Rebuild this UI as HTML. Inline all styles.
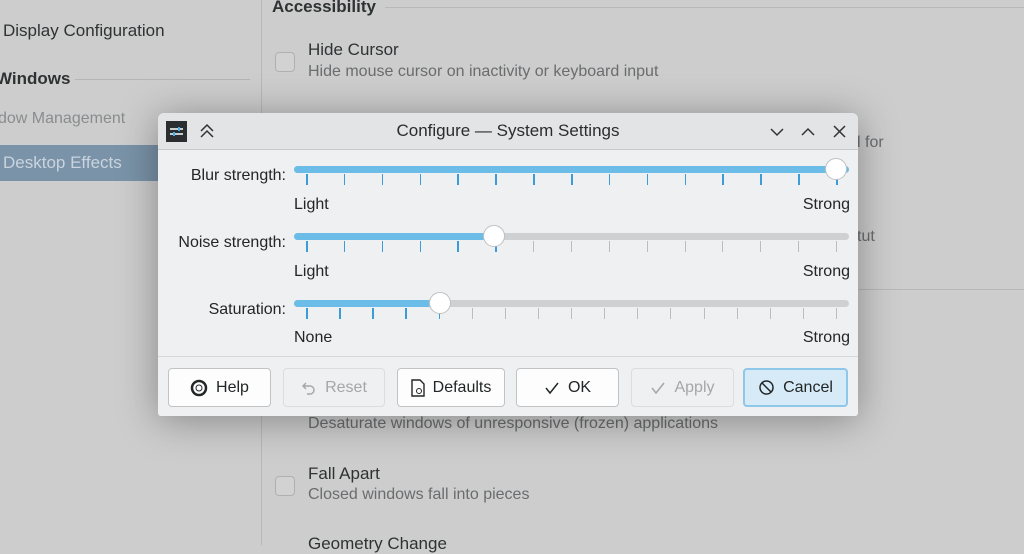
<!DOCTYPE html>
<html><head><meta charset="utf-8"><style>
*{margin:0;padding:0;box-sizing:border-box}
body{width:1024px;height:545px;overflow:hidden;background:#cdcdcd;font-family:"Liberation Sans",sans-serif;position:relative;color:#2a2a2a}
.a{position:absolute;white-space:nowrap}
.bg{font-size:17px;color:#2f3233}
.sub{font-size:16px;color:#6a6c6e}
.cb{position:absolute;width:20px;height:20px;border:1px solid #b0b0b0;border-radius:4px;background:#d2d2d2}
.dlg{position:absolute;left:158px;top:113px;width:700px;height:303px;background:#eff0f1;border-radius:6px 6px 3px 3px;box-shadow:0 4px 40px rgba(0,0,0,.35);overflow:hidden}
.tb{position:absolute;left:0;top:0;width:700px;height:37px;background:#e3e4e6;border-bottom:1px solid #c8c9cb}
.lbl{position:absolute;font-size:16px;color:#232627;text-align:right;width:128px;left:0}
.trk{position:absolute;left:136px;width:555px;height:7px;border-radius:4px;background:#cfd0d2}
.fill{position:absolute;left:0;top:0;height:7px;border-radius:4px;background:#6bbde8}
.tk{position:absolute;width:1px;height:11px;background:#bcbdbf}
.tk.b{background:#3d9cd8;width:1.5px}
.th{position:absolute;width:22px;height:22px;border-radius:50%;background:#fff;border:1px solid #bfc0c2}
.sm{position:absolute;font-size:16px;color:#232627}
.btn{position:absolute;top:255px;height:39px;border:1px solid #c2c3c5;border-radius:4px;background:#fdfdfd;font-size:16px;color:#232627;display:flex;align-items:center;justify-content:center;gap:8px}
.btn.dis{background:#eff0f1;color:#a4a6a8;border-color:#dcdddf}
</style></head><body>
<div class="a" style="left:261px;top:0;width:1px;height:545px;background:#b8b8b8"></div>
<div class="a" style="left:385px;top:7px;width:639px;height:1px;background:#b8b8b8"></div>
<div class="a" style="left:856px;top:289px;width:168px;height:1px;background:#b8b8b8"></div>
<div class="a bg" style="left:3px;top:21px">Display Configuration</div>
<div class="a bg" style="left:-4px;top:69px;font-weight:bold">Windows</div>
<div class="a" style="left:75px;top:79px;width:175px;height:1px;background:#b5b5b5"></div>
<div class="a sub" style="left:-2px;top:110px;color:#8a8c8e">dow Management</div>
<div class="a" style="left:0;top:145px;width:160px;height:36px;background:#7a93a8"></div>
<div class="a bg" style="left:3px;top:153px;color:#c9d4de">Desktop Effects</div>
<div class="a bg" style="left:272px;top:-3px;font-weight:bold">Accessibility</div>
<div class="cb" style="left:275px;top:52px"></div>
<div class="a bg" style="left:308px;top:40px">Hide Cursor</div>
<div class="a sub" style="left:308px;top:63px">Hide mouse cursor on inactivity or keyboard input</div>
<div class="a sub" style="left:857px;top:134px">l for</div>
<div class="a sub" style="left:857px;top:228px">tut</div>
<div class="a sub" style="left:308px;top:415px">Desaturate windows of unresponsive (frozen) applications</div>
<div class="cb" style="left:275px;top:476px"></div>
<div class="a bg" style="left:308px;top:464px">Fall Apart</div>
<div class="a sub" style="left:308px;top:486px">Closed windows fall into pieces</div>
<div class="a bg" style="left:308px;top:534px">Geometry Change</div>

<div class="dlg">
<div class="tb">
 <div class="a" style="left:8px;top:8px;width:21px;height:21px;background:#2b2e31"><svg width="21" height="21"><path d="M4 8h13M4 13h13" stroke="#fff" stroke-width="1.5"/><rect x="12" y="6" width="2" height="4" fill="#3daee9"/><rect x="7" y="11" width="2" height="4" fill="#3daee9"/></svg></div>
 <svg class="a" style="left:41px;top:9px" width="16" height="18"><path d="M2 9l6-6 6 6M2 15l6-6 6 6" stroke="#333" stroke-width="1.5" fill="none"/></svg>
 <div class="a" style="left:0;width:700px;text-align:center;top:8px;font-size:17px;color:#2a2c2e">Configure — System Settings</div>
 <svg class="a" style="left:610px;top:11px" width="80" height="16"><path d="M3 5l6 6 6-6" stroke="#333" stroke-width="1.5" fill="none"/><path d="M34 11l6-6 6 6" stroke="#333" stroke-width="1.5" fill="none"/><path d="M66 2l11 11M77 2L66 13" stroke="#333" stroke-width="1.5" fill="none"/></svg>
</div>
<div class="lbl" style="top:54px">Blur strength:</div>
<div class="lbl" style="top:121px">Noise strength:</div>
<div class="lbl" style="top:188px">Saturation:</div>
<div class="trk" style="top:53px"><div class="fill" style="width:555px"></div></div>
<div class="trk" style="top:120px"><div class="fill" style="width:200px"></div></div>
<div class="trk" style="top:187px"><div class="fill" style="width:146px"></div></div>
<div id="ticks"></div>
<div class="th" style="left:667px;top:45px"></div>
<div class="th" style="left:325px;top:112px"></div>
<div class="th" style="left:271px;top:179px"></div>
<div class="sm" style="left:136px;top:83px">Light</div><div class="sm" style="right:8px;top:83px">Strong</div>
<div class="sm" style="left:136px;top:150px">Light</div><div class="sm" style="right:8px;top:150px">Strong</div>
<div class="sm" style="left:136px;top:216px">None</div><div class="sm" style="right:8px;top:216px">Strong</div>
<div class="a" style="left:0;top:243px;width:700px;height:1px;background:#d6d7d9"></div>
<div class="btn" style="left:10px;width:103px"><svg width="18" height="18"><circle cx="9" cy="9" r="7" stroke="#232627" stroke-width="2.5" fill="none"/><circle cx="9" cy="9" r="3" fill="#fff" stroke="#232627"/></svg>Help</div>
<div class="btn dis" style="left:125px;width:102px"><svg width="16" height="16"><path d="M5 3L2 6l3 3M2 6h7a4 4 0 010 8H6" stroke="#a4a6a8" stroke-width="1.4" fill="none"/></svg>Reset</div>
<div class="btn" style="left:239px;width:108px"><svg width="14" height="18"><path d="M1 1h8l4 4v12H1z" stroke="#232627" stroke-width="1.4" fill="none"/><circle cx="8" cy="12" r="2.5" stroke="#232627" fill="none"/></svg>Defaults</div>
<div class="btn" style="left:358px;width:103px"><svg width="16" height="16"><path d="M2 8l4 5 8-10" stroke="#232627" stroke-width="1.5" fill="none"/></svg>OK</div>
<div class="btn dis" style="left:473px;width:103px"><svg width="16" height="16"><path d="M2 8l4 5 8-10" stroke="#a4a6a8" stroke-width="1.5" fill="none"/></svg>Apply</div>
<div class="btn" style="left:585px;width:105px;background:#d6ebf7;border:2px solid #8fc7e8"><svg width="17" height="17"><circle cx="8.5" cy="8.5" r="6.5" stroke="#232627" stroke-width="1.5" fill="none"/><path d="M4 4l9 9" stroke="#232627" stroke-width="1.5"/></svg>Cancel</div>
</div>
<script>
var t=document.getElementById('ticks'),h='';
function row(top,n,end,thumb){for(var i=0;i<n;i++){var x=148+i*(530/(n-1));h+='<div class="tk'+(x<=thumb+1?' b':'')+'" style="left:'+x.toFixed(1)+'px;top:'+top+'px"></div>';}}
row(61,15,678,680);row(128,15,678,337);row(195,17,678,283);
t.innerHTML=h;
</script>
</body></html>
